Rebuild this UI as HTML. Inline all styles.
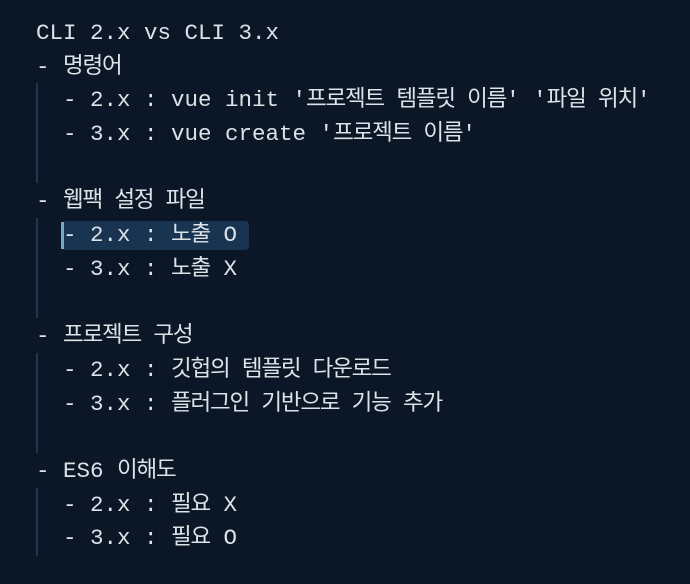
<!DOCTYPE html>
<html><head><meta charset="utf-8"><style>
html,body{margin:0;padding:0;background:#0b1727;width:690px;height:584px;overflow:hidden}
.w{position:absolute;left:36px;top:17px;font-family:"Liberation Mono","Noto Sans CJK KR",monospace;font-size:22.5px;color:#dde2e8}
.l{height:33.7px;line-height:33.7px;white-space:pre}
.k{letter-spacing:-1.2px}
.g{position:absolute;left:36px;width:2px;background:#1f3550}
.hl{position:absolute;left:61px;top:221px;width:188px;height:29px;background:#183450;border-radius:4px}
.cur{position:absolute;left:61px;top:222px;width:3px;height:27px;background:#7aa6c8}
</style></head><body>
<div class="g" style="top:83px;height:100px"></div>
<div class="g" style="top:218px;height:100px"></div>
<div class="g" style="top:353px;height:100px"></div>
<div class="g" style="top:488px;height:68px"></div>
<div class="hl"></div><div class="cur"></div>
<div class="w"><div class="l">CLI 2.x vs CLI 3.x</div><div class="l">- <span class="k">명령어</span></div><div class="l">  - 2.x : vue init '<span class="k">프로젝트 템플릿 이름</span>' '<span class="k">파일 위치</span>'</div><div class="l">  - 3.x : vue create '<span class="k">프로젝트 이름</span>'</div><div class="l"> </div><div class="l">- <span class="k">웹팩 설정 파일</span></div><div class="l">  - 2.x : <span class="k">노출</span> O</div><div class="l">  - 3.x : <span class="k">노출</span> X</div><div class="l"> </div><div class="l">- <span class="k">프로젝트 구성</span></div><div class="l">  - 2.x : <span class="k">깃헙의 템플릿 다운로드</span></div><div class="l">  - 3.x : <span class="k">플러그인 기반으로 기능 추가</span></div><div class="l"> </div><div class="l">- ES6 <span class="k">이해도</span></div><div class="l">  - 2.x : <span class="k">필요</span> X</div><div class="l">  - 3.x : <span class="k">필요</span> O</div></div>
</body></html>
